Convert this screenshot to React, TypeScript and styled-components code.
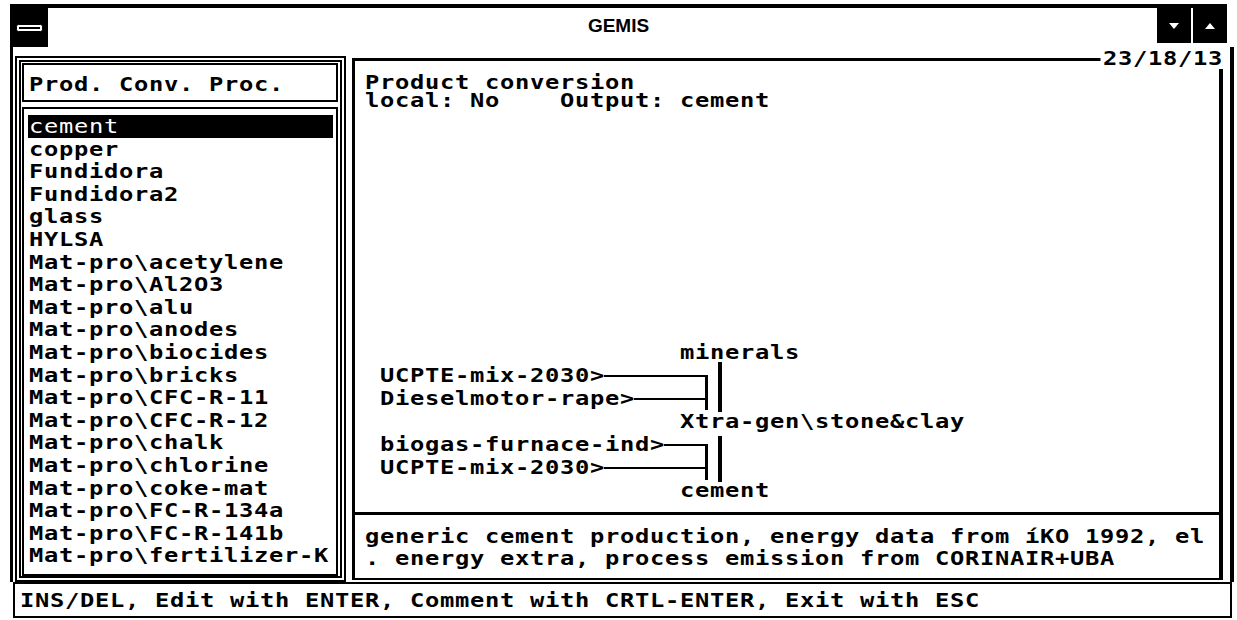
import React from 'react'
import styled, { createGlobalStyle } from 'styled-components'

const MONO = `"DejaVu Sans Mono", "Liberation Mono", monospace`
const CELL = 15

const products = [
  'cement',
  'copper',
  'Fundidora',
  'Fundidora2',
  'glass',
  'HYLSA',
  'Mat-pro\\acetylene',
  'Mat-pro\\Al2O3',
  'Mat-pro\\alu',
  'Mat-pro\\anodes',
  'Mat-pro\\biocides',
  'Mat-pro\\bricks',
  'Mat-pro\\CFC-R-11',
  'Mat-pro\\CFC-R-12',
  'Mat-pro\\chalk',
  'Mat-pro\\chlorine',
  'Mat-pro\\coke-mat',
  'Mat-pro\\FC-R-134a',
  'Mat-pro\\FC-R-141b',
  'Mat-pro\\fertilizer-K'
]

const diagram = [
  { col: 21, text: 'minerals' },
  { col: 1, text: 'UCPTE-mix-2030>' },
  { col: 1, text: 'Dieselmotor-rape>' },
  { col: 21, text: 'Xtra-gen\\stone&clay' },
  { col: 1, text: 'biogas-furnace-ind>' },
  { col: 1, text: 'UCPTE-mix-2030>' },
  { col: 21, text: 'cement' }
]

// DOS text cells are 15px wide: 12px of glyph advance, stretched by 1.25
const GlobalStyle = createGlobalStyle`
  html, body {
    margin: 0;
    padding: 0;
    background: #fff;
  }
  body {
    width: 1237px;
    height: 620px;
    overflow: hidden;
    color: #000;
    font-family: ${MONO};
    font-weight: bold;
    font-size: 19px;
    letter-spacing: 0.56px;
  }
`

const Txt = styled.span`
  display: inline-block;
  white-space: pre;
  transform: scaleX(1.25);
  transform-origin: 0 50%;
`

const Window = styled.div`
  box-sizing: border-box;
  width: 1237px;
  height: 620px;
  padding: 4px 3px 2px 10px;
  display: flex;
  flex-direction: column;
  background: #fff;
`

const TitleBar = styled.div`
  box-sizing: border-box;
  height: 43px;
  margin-right: 7px;
  border-top: 4px solid #000;
  display: flex;
  align-items: flex-start;
`

const SysMenu = styled.div`
  width: 38px;
  height: 39px;
  background: #000;
  display: flex;
  align-items: center;
  justify-content: center;
`

const Title = styled.div`
  flex: 1;
  padding-left: 32px;
  text-align: center;
  font-family: 'Liberation Sans', Arial, sans-serif;
  font-size: 19px;
  font-weight: bold;
  letter-spacing: 0;
  line-height: 36px;
`

const WinButtons = styled.div`
  display: flex;
  gap: 2px;
`

const WinButton = styled.div`
  width: 34px;
  height: 35px;
  background: #000;
  display: flex;
  align-items: center;
  justify-content: center;
`

const Body = styled.div`
  flex: 1;
  min-height: 0;
  display: flex;
  padding: 9px 0 0 2px;
  border-left: 3px solid #000;
  border-right: 4px solid #000;
`

const ListPanel = styled.div`
  box-sizing: border-box;
  width: 331px;
  margin-right: 6px;
  padding: 1px 2px 0 1px;
  border: 6px double #000;
  display: flex;
  flex-direction: column;
  gap: 5px;
`

const ListHeader = styled.div`
  box-sizing: border-box;
  height: 39px;
  padding: 3px 0 0 5px;
  border: 2px solid #000;
  line-height: 32px;
`

const ListBox = styled.div`
  flex: 1;
  min-height: 0;
  overflow: hidden;
  padding: 6px 3px 0 4px;
  border: 2px solid #000;
`

const ListItem = styled.div<{ $selected?: boolean }>`
  padding-left: 1px;
  line-height: 22.6px;
  background: ${p => (p.$selected ? '#000' : 'transparent')};
  color: ${p => (p.$selected ? '#fff' : '#000')};
  font-weight: ${p => (p.$selected ? 'normal' : 'bold')};
`

const DetailPanel = styled.div`
  flex: 1;
  position: relative;
  margin: 2px 7px 2px 0;
  border-style: solid;
  border-color: #000;
  border-width: 3px 4px 2px 3px;
  display: flex;
  flex-direction: column;
`

const DateLabel = styled.div`
  position: absolute;
  top: -14px;
  right: -4px;
  padding-left: 2px;
  background: #fff;
  line-height: 22px;
  white-space: pre;
  transform: scaleX(1.25);
  transform-origin: 100% 50%;
`

const Info = styled.div`
  margin: 12px 0 0 10px;
  line-height: 18px;
`

const Diagram = styled.div`
  position: relative;
  margin-top: auto;
  margin-bottom: 10px;
`

const DiagramRow = styled.div<{ $col: number }>`
  height: 23px;
  line-height: 23px;
  padding-left: ${p => 10 + p.$col * CELL}px;
`

const Wires = styled.svg`
  position: absolute;
  left: 0;
  top: 0;
  width: 100%;
  height: 100%;
  overflow: visible;
  pointer-events: none;
`

const Description = styled.div`
  padding: 10px 0 9px 10px;
  border-top: 3px solid #000;
  line-height: 22px;
`

const StatusBar = styled.div`
  box-sizing: border-box;
  height: 36px;
  margin: 0 2px 0 3px;
  padding-left: 5px;
  border: 2px solid #000;
  line-height: 32px;
`

const Connectors = () => (
  <Wires>
    <g fill="#000">
      <rect x={249} y={34} width={103} height={2} />
      <rect x={279} y={57} width={73} height={2} />
      <rect x={350} y={34} width={3} height={35} />
      <rect x={363} y={21} width={4} height={50} />
      <rect x={309} y={103} width={43} height={2} />
      <rect x={249} y={126} width={103} height={2} />
      <rect x={350} y={103} width={3} height={36} />
      <rect x={363} y={95} width={4} height={46} />
    </g>
  </Wires>
)

export default function App() {
  return (
    <>
      <GlobalStyle />
      <Window>
        <TitleBar>
          <SysMenu>
            <svg width="27" height="8" viewBox="0 0 27 8">
              <rect x="0.5" y="0.5" width="26" height="7" rx="2" fill="#fff" stroke="#000" />
              <rect x="3" y="3" width="21" height="2" fill="#000" />
            </svg>
          </SysMenu>
          <Title>GEMIS</Title>
          <WinButtons>
            <WinButton>
              <svg width="10" height="6" viewBox="0 0 10 6">
                <polygon points="0,0 10,0 5,6" fill="#fff" />
              </svg>
            </WinButton>
            <WinButton>
              <svg width="10" height="6" viewBox="0 0 10 6">
                <polygon points="0,6 10,6 5,0" fill="#fff" />
              </svg>
            </WinButton>
          </WinButtons>
        </TitleBar>
        <Body>
          <ListPanel>
            <ListHeader>
              <Txt>Prod. Conv. Proc.</Txt>
            </ListHeader>
            <ListBox>
              {products.map((name, i) => (
                <ListItem key={name} $selected={i === 0}>
                  <Txt>{name}</Txt>
                </ListItem>
              ))}
            </ListBox>
          </ListPanel>
          <DetailPanel>
            <DateLabel>23/18/13</DateLabel>
            <Info>
              <Txt>{'Product conversion\nlocal: No    Output: cement'}</Txt>
            </Info>
            <Diagram>
              {diagram.map((row, i) => (
                <DiagramRow key={i} $col={row.col}>
                  <Txt>{row.text}</Txt>
                </DiagramRow>
              ))}
              <Connectors />
            </Diagram>
            <Description>
              <Txt>
                {'generic cement production, energy data from íKO 1992, el\n. energy extra, process emission from CORINAIR+UBA'}
              </Txt>
            </Description>
          </DetailPanel>
        </Body>
        <StatusBar>
          <Txt>INS/DEL, Edit with ENTER, Comment with CRTL-ENTER, Exit with ESC</Txt>
        </StatusBar>
      </Window>
    </>
  )
}
